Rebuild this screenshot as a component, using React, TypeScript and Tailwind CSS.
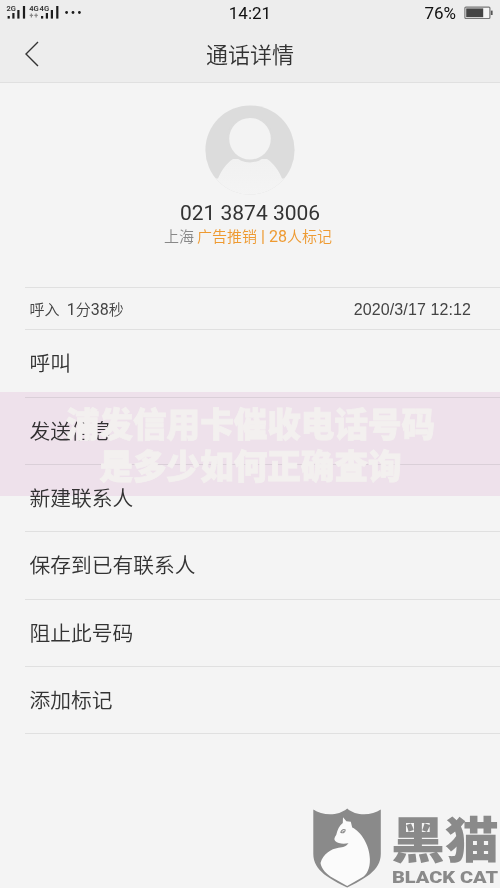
const actions = ["呼叫", "发送信息", "新建联系人", "保存到已有联系人", "阻止此号码", "添加标记"];

const CJK = "font-['Noto_Sans_CJK_SC',sans-serif]";
const LATIN = "font-['Roboto','Noto_Sans_CJK_SC',sans-serif]";

function Signals() {
  return (
    <svg className="block h-[28px] w-[90px]" viewBox="0 0 90 28">
      <g fill="#1c1c1c">
        <rect x="7.6" y="16" width="2.2" height="2.6" />
        <rect x="12.3" y="13" width="2.2" height="5.6" />
        <rect x="17.3" y="10" width="2.2" height="8.6" />
        <rect x="22.9" y="6" width="2.2" height="12.6" />
        <rect x="41" y="16" width="2.2" height="2.6" />
        <rect x="45.8" y="13" width="2.2" height="5.6" />
        <rect x="50.8" y="10" width="2.2" height="8.6" />
        <rect x="56.2" y="6" width="2.2" height="12.6" />
        <circle cx="66.6" cy="12.5" r="1.4" />
        <circle cx="73" cy="12.5" r="1.4" />
        <circle cx="79.4" cy="12.5" r="1.4" />
      </g>
      <g fill="#333" fontFamily="Roboto, sans-serif" fontSize="7.2" fontWeight="600">
        <text x="6.4" y="11" textLength="9.4" lengthAdjust="spacingAndGlyphs">2G</text>
        <text x="29.2" y="11" textLength="9.6" lengthAdjust="spacingAndGlyphs">4G</text>
        <text x="39.6" y="11" textLength="9.6" lengthAdjust="spacingAndGlyphs">4G</text>
      </g>
      <path d="M31.4 13.4v4M29.7 15.4h3.4M36.1 13.4v4M34.4 15.4h3.4" stroke="#888" strokeWidth="1.2" />
    </svg>
  );
}

function Battery() {
  return (
    <svg className="block h-[14px] w-[30px]" viewBox="0 0 30 14">
      <rect x="0.9" y="1.1" width="25" height="11.4" rx="1" fill="#f4f4f4" stroke="#777" strokeWidth="1.2" />
      <rect x="2.2" y="2.4" width="17" height="8.8" fill="#444" />
      <rect x="26.8" y="4.6" width="1.8" height="4.4" fill="#555" />
    </svg>
  );
}

function Avatar() {
  return (
    <svg className="block h-[90px] w-[90px]" viewBox="0 0 90 90">
      <defs>
        <clipPath id="disc">
          <circle cx="45" cy="45" r="44.6" />
        </clipPath>
        <linearGradient id="body" x1="0" y1="0" x2="0" y2="1">
          <stop offset="0" stopColor="#f1f1f1" />
          <stop offset="1" stopColor="#f4f4f4" />
        </linearGradient>
      </defs>
      <g clipPath="url(#disc)">
        <rect width="90" height="90" fill="#dcdcdc" />
        <path d="M-2 92V73.5H13C16 66 21 58.5 28 54H62C69 58.5 74 66 77 73.5H92V92Z" fill="url(#body)" />
        <circle cx="45" cy="34.2" r="23.2" fill="#dcdcdc" />
        <circle cx="45" cy="33.7" r="20.8" fill="#f3f3f3" />
      </g>
    </svg>
  );
}

function BlackCat() {
  return (
    <div className="absolute right-0 bottom-0 flex h-[80px] w-[188px]">
      <svg className="block h-[80px] w-[70px] shrink-0" viewBox="0 0 70 80">
        <path d="M1.3 1.5C10 7.5 26 8.5 35.2 .5C44 8.5 60 7.5 68.8 1.5V46C68.8 63 51 71.5 35.2 79.5C19 71.5 1.3 63 1.3 46Z" fill="#8a8a8a" />
        <path d="M31 9.3L34.4 13.3L38.8 13.8L40.2 19.5C49 23.5 57.5 37 57.9 51C58.2 61 54.5 67 50 69.5L35.2 78L21 70C14 66 9.5 61 8.5 55C11 46 19 41 26.5 39.8C31.5 39 34 38.5 36.5 35.2C31.5 36.2 26 35.8 23.2 33C21.8 31.5 22.3 29.5 24.2 27C25.5 21.5 27.2 17.5 30.8 15Z" fill="#fbfbfb" />
        <path d="M28.8 24.3C29.8 21.6 32 21 33.2 22C33 24.3 31 25.5 28.8 24.3Z" fill="none" stroke="#8a8a8a" strokeWidth="1.1" />
        <circle cx="31.2" cy="23.4" r=".7" fill="#8a8a8a" />
      </svg>
      <svg className="block h-[80px] w-[118px]" viewBox="0 0 118 80" fill="#8a8a8a">
        <text x="9" y="49.5" fontFamily="'Noto Sans CJK SC', sans-serif" fontSize="49" fontWeight="900" textLength="108" lengthAdjust="spacingAndGlyphs">黑猫</text>
        <text x="10" y="75" fontFamily="Roboto, sans-serif" fontSize="16.5" fontWeight="900" textLength="106" lengthAdjust="spacingAndGlyphs">BLACK CAT</text>
      </svg>
    </div>
  );
}

export default function App() {
  return (
    <div className={`relative flex h-[888px] w-[500px] flex-col overflow-hidden bg-[#f4f4f4] text-[#333] ${CJK}`}>
      <header className="h-[83px] shrink-0 border-b border-[#e0e0e0] bg-[#ededed]">
        <div className={`grid h-[28px] grid-cols-3 text-[17px] leading-[27px] text-[#111] ${LATIN}`}>
          <Signals />
          <span className="text-center">14:21</span>
          <div className="flex justify-end pr-[6px]">
            <span className="mr-[8px]">76%</span>
            <div className="pt-[6px]"><Battery /></div>
          </div>
        </div>
        <div className="grid h-[54px] grid-cols-[1fr_auto_1fr]">
          <svg className="ml-[24px] mt-[12px] block h-[28px] w-[16px]" viewBox="0 0 16 28" fill="none" stroke="#333" strokeWidth="1.4">
            <path d="M14 2L2 14L14 26" />
          </svg>
          <h1 className="text-[22px] leading-[50px] font-[350]">通话详情</h1>
        </div>
      </header>

      <section className="flex h-[204px] shrink-0 flex-col items-center pt-[22px]">
        <Avatar />
        <div className={`mt-[4px] text-[21px] leading-[28px] ${LATIN}`}>021 3874 3006</div>
        <div className={`-ml-[4px] flex gap-[3px] text-[15px] leading-[20px] font-[350] whitespace-pre ${LATIN}`}>
          <span className="text-[#888]">上海</span>
          <span className="text-[#ee9a31]">广告推销<span className="text-[16px] font-normal"> | 28</span>人标记</span>
        </div>
      </section>

      <main className="ml-[25px] flex flex-col border-t border-[#e0e0e0]">
        <div className="flex h-[42.4px] items-center justify-between border-b border-[#e0e0e0] pr-[29px] pl-[4.5px] text-[#444]">
          <span className={`pt-[2px] text-[15px] font-[350] whitespace-pre ${LATIN}`}>呼入  <span className="text-[16px] font-normal">1</span>分<span className="text-[16px] font-normal">38</span>秒</span>
          <span className="pt-[3px] font-['Liberation_Sans',sans-serif] text-[16px] tracking-[0.1px]">2020/3/17 12:12</span>
        </div>
        {actions.map((label) => (
          <div key={label} className="flex h-[67.3px] items-center border-b border-[#e0e0e0] pb-[1px] pl-[4.5px] text-[20.75px] font-[350]">
            {label}
          </div>
        ))}
      </main>

      <div className="absolute inset-x-0 top-[392px] h-[104px] bg-[#f9ecf6] mix-blend-multiply" />
      <div className="absolute inset-x-0 top-[392px] flex h-[104px] flex-col items-center justify-center pl-[1px] text-[33.6px] leading-[42px] font-black text-[#f3f0ef] [-webkit-text-stroke:0.8px_#f3f0ef]">
        <span>浦发信用卡催收电话号码</span>
        <span>是多少如何正确查询</span>
      </div>

      <BlackCat />
    </div>
  );
}
